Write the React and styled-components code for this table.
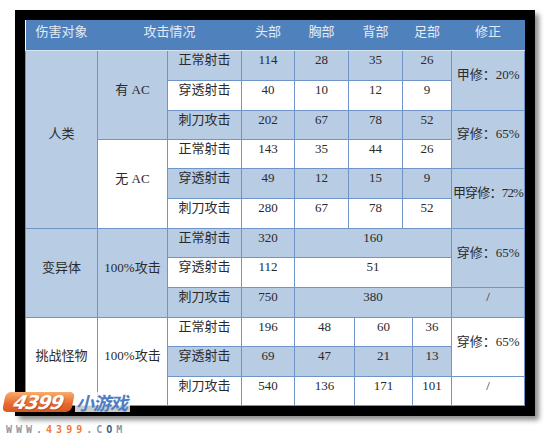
import React from 'react';
import styled, { createGlobalStyle } from 'styled-components';

const GlobalStyle = createGlobalStyle`
  body {
    margin: 0;
    background: #fff;
    font-family: 'Liberation Serif', 'Noto Sans CJK SC', serif;
  }
`;

const colWidths = [72, 70, 74, 53, 54, 6, 48, 10, 39, 73];
const rowHeights = [30, 30, 29, 29, 30, 30, 29, 30, 30, 29, 30, 29];

// each row: [tone, cells]; cell: [text, colSpan, rowSpan]
const rows = [
  ['b', [['人类', 1, 6], ['有 AC', 1, 3], ['正常射击'], ['114'], ['28'], ['35', 2], ['26', 2], ['甲修：20%', 1, 2]]],
  ['w', [['穿透射击'], ['40'], ['10'], ['12', 2], ['9', 2]]],
  ['b', [['刺刀攻击'], ['202'], ['67'], ['78', 2], ['52', 2], ['穿修：65%', 1, 2]]],
  ['w', [['无 AC', 1, 3], ['正常射击'], ['143'], ['35'], ['44', 2], ['26', 2]]],
  ['b', [['穿透射击'], ['49'], ['12'], ['15', 2], ['9', 2], ['甲穿修：72%', 1, 2]]],
  ['w', [['刺刀攻击'], ['280'], ['67'], ['78', 2], ['52', 2]]],
  ['b', [['变异体', 1, 3], ['100%攻击', 1, 3], ['正常射击'], ['320'], ['160', 5], ['穿修：65%', 1, 2]]],
  ['w', [['穿透射击'], ['112'], ['51', 5]]],
  ['b', [['刺刀攻击'], ['750'], ['380', 5], ['/']]],
  ['w', [['挑战怪物', 1, 3], ['100%攻击', 1, 3], ['正常射击'], ['196'], ['48', 2], ['60', 2], ['36'], ['穿修：65%', 1, 2]]],
  ['b', [['穿透射击'], ['69'], ['47', 2], ['21', 2], ['13']]],
  ['w', [['刺刀攻击'], ['540'], ['136', 2], ['171', 2], ['101'], ['/']]],
];

const headers = [
  ['伤害对象', 1],
  ['攻击情况', 2],
  ['头部', 1],
  ['胸部', 1],
  ['背部', 2],
  ['足部', 2],
  ['修正', 1],
];

const Page = styled.div`
  position: relative;
  width: 550px;
  height: 436px;
  overflow: hidden;
`;

const Frame = styled.div`
  margin: 10px 0 0 15px;
  width: 499px;
  padding: 10px 11px 10px 10px;
  background: #000;
  box-shadow: 4px 4px 5px rgba(0, 0, 0, 0.45);
`;

const Table = styled.table`
  width: 499px;
  table-layout: fixed;
  border-collapse: collapse;
  background: #fff;
`;

const HeadRow = styled.tr`
  height: 30px;
`;

const HeadCell = styled.th`
  padding: 0 0 6px;
  background: #4f81bd;
  color: #e3ebf5;
  font-weight: normal;
  font-size: 13px;
  line-height: 16px;
  text-align: center;
  vertical-align: middle;
  border-bottom: 1px solid #dbe5f1;
`;

const Cell = styled.td`
  padding: 0 0 10px;
  background: ${(p) => (p.$tone === 'b' ? '#b8cce4' : '#ffffff')};
  color: #2a2a2a;
  font-size: 13px;
  line-height: 16px;
  text-align: center;
  vertical-align: middle;
  white-space: nowrap;
  letter-spacing: ${(p) => (p.$tight ? '-0.8px' : '0')};
  border: 1px solid #6f94c8;
`;

const Logo = styled.div`
  position: absolute;
  left: 4px;
  top: 392px;
`;

const LogoRow = styled.div`
  display: flex;
  align-items: center;
`;

const Badge = styled.div`
  width: 69px;
  height: 20px;
  border-radius: 5px;
  transform: skewX(-12deg);
  background: linear-gradient(#f9ad6c, #e8672e 60%, #d9581f);
  display: flex;
  align-items: center;
  justify-content: center;
  color: #fff;
  font: italic bold 19px 'DejaVu Sans', sans-serif;
  letter-spacing: -1px;
  text-shadow: 1px 1px 0 rgba(150, 60, 20, 0.5);
`;

const LogoText = styled.div`
  margin-left: 2px;
  padding: 0 3px 0 1px;
  height: 20px;
  background: rgba(255, 255, 255, 0.8);
  color: #4c7ec4;
  font: italic bold 18px 'Noto Sans CJK SC', sans-serif;
  line-height: 20px;
  letter-spacing: -1px;
`;

const Url = styled.div`
  margin-top: 12px;
  margin-left: 2px;
  font: bold 10px 'DejaVu Sans Mono', monospace;
  letter-spacing: 4px;
  color: #8c98a6;
`;

const UrlPart = styled.span`
  color: ${(p) => p.$c};
`;

export default function App() {
  return (
    <Page>
      <GlobalStyle />
      <Frame>
        <Table>
          <colgroup>
            {colWidths.map((w, i) => (
              <col key={i} style={{ width: w }} />
            ))}
          </colgroup>
          <thead>
            <HeadRow>
              {headers.map(([t, span]) => (
                <HeadCell key={t} colSpan={span}>
                  {t}
                </HeadCell>
              ))}
            </HeadRow>
          </thead>
          <tbody>
            {rows.map(([tone, cells], r) => (
              <tr key={r} style={{ height: rowHeights[r] }}>
                {cells.map(([t, cs = 1, rs = 1], c) => (
                  <Cell
                    key={c}
                    colSpan={cs}
                    rowSpan={rs}
                    $tone={tone}
                    $tight={t.length > 6}
                  >
                    {t}
                  </Cell>
                ))}
              </tr>
            ))}
          </tbody>
        </Table>
      </Frame>
      <Logo>
        <LogoRow>
          <Badge>4399</Badge>
          <LogoText>小游戏</LogoText>
        </LogoRow>
        <Url>
          WWW.<UrlPart $c="#f07a3c">4399</UrlPart>.C<UrlPart $c="#3b5f8f">O</UrlPart>M
        </Url>
      </Logo>
    </Page>
  );
}
